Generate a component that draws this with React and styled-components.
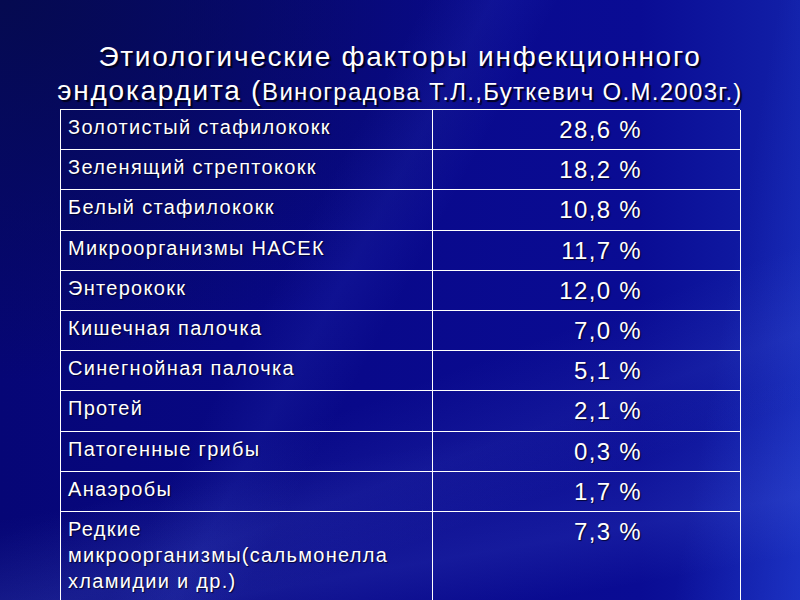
import React from "react";
import styled, { createGlobalStyle } from "styled-components";

const GlobalStyle = createGlobalStyle`
  html, body {
    margin: 0;
    padding: 0;
    background: #06066e;
  }
`;

const Slide = styled.div`
  width: 800px;
  height: 600px;
  overflow: hidden;
  font-family: "Liberation Sans", Arial, sans-serif;
  color: #ffffff;
  background:
    linear-gradient(118deg, transparent 0%, transparent 38%, rgba(90, 120, 255, 0.08) 44%, transparent 50%, transparent 100%),
    linear-gradient(160deg, transparent 0%, transparent 60%, rgba(120, 150, 255, 0.08) 70%, transparent 78%),
    linear-gradient(170deg, transparent 70%, rgba(110, 140, 255, 0.12) 86%, transparent 94%),
    linear-gradient(100deg, transparent 0%, transparent 86%, rgba(50, 90, 255, 0.3) 100%),
    radial-gradient(ellipse at 0% 0%, #050a50 0%, transparent 45%),
    linear-gradient(to right, #060676 0%, #09098a 45%, #0a0c94 80%, #1220a8 100%);
`;

const Title = styled.h1`
  margin: 0;
  padding-top: 40px;
  font-weight: normal;
  font-size: 28px;
  line-height: 34px;
  letter-spacing: 0.062em;
  text-align: center;
  text-shadow: 2px 2px 1px rgba(0, 0, 20, 0.9);
`;

const Source = styled.span`
  font-size: 24px;
  letter-spacing: 0.054em;
`;

const Table = styled.div`
  display: grid;
  grid-template-columns: 372px 308px;
  margin-left: 60px;
  width: 680px;
  border-top: 1px solid #ffffff;
  border-left: 1px solid #ffffff;
  box-sizing: border-box;
`;

const Cell = styled.div`
  box-sizing: border-box;
  height: ${(p) => (p.$tall ? "120px" : "40.2px")};
  border-right: 1px solid #ffffff;
  border-bottom: 1px solid #ffffff;
  text-shadow: 1px 1px 1px rgba(0, 0, 30, 0.8);
  white-space: nowrap;
`;

const NameCell = styled(Cell)`
  padding: 4px 0 0 7px;
  font-size: 20px;
  line-height: 26px;
  letter-spacing: 0.065em;
`;

const ValueCell = styled(Cell)`
  padding: 5px 98px 0 0;
  font-size: 24px;
  line-height: 30px;
  letter-spacing: 0.055em;
  text-align: right;
`;

const rows = [
  ["Золотистый стафилококк", "28,6 %"],
  ["Зеленящий стрептококк", "18,2 %"],
  ["Белый стафилококк", "10,8 %"],
  ["Микроорганизмы НАСЕК", "11,7 %"],
  ["Энтерококк", "12,0 %"],
  ["Кишечная палочка", "7,0 %"],
  ["Синегнойная палочка", "5,1 %"],
  ["Протей", "2,1 %"],
  ["Патогенные грибы", "0,3 %"],
  ["Анаэробы", "1,7 %"],
];

export default function App() {
  return (
    <Slide>
      <GlobalStyle />
      <Title>
        Этиологические факторы инфекционного
        <br />
        эндокардита (<Source>Виноградова Т.Л.,Буткевич О.М.2003г.)</Source>
      </Title>
      <Table>
        {rows.map(([name, value]) => (
          <React.Fragment key={name}>
            <NameCell>{name}</NameCell>
            <ValueCell>{value}</ValueCell>
          </React.Fragment>
        ))}
        <NameCell $tall>
          Редкие
          <br />
          микроорганизмы(сальмонелла
          <br />
          хламидии и др.)
        </NameCell>
        <ValueCell $tall>7,3 %</ValueCell>
      </Table>
    </Slide>
  );
}
